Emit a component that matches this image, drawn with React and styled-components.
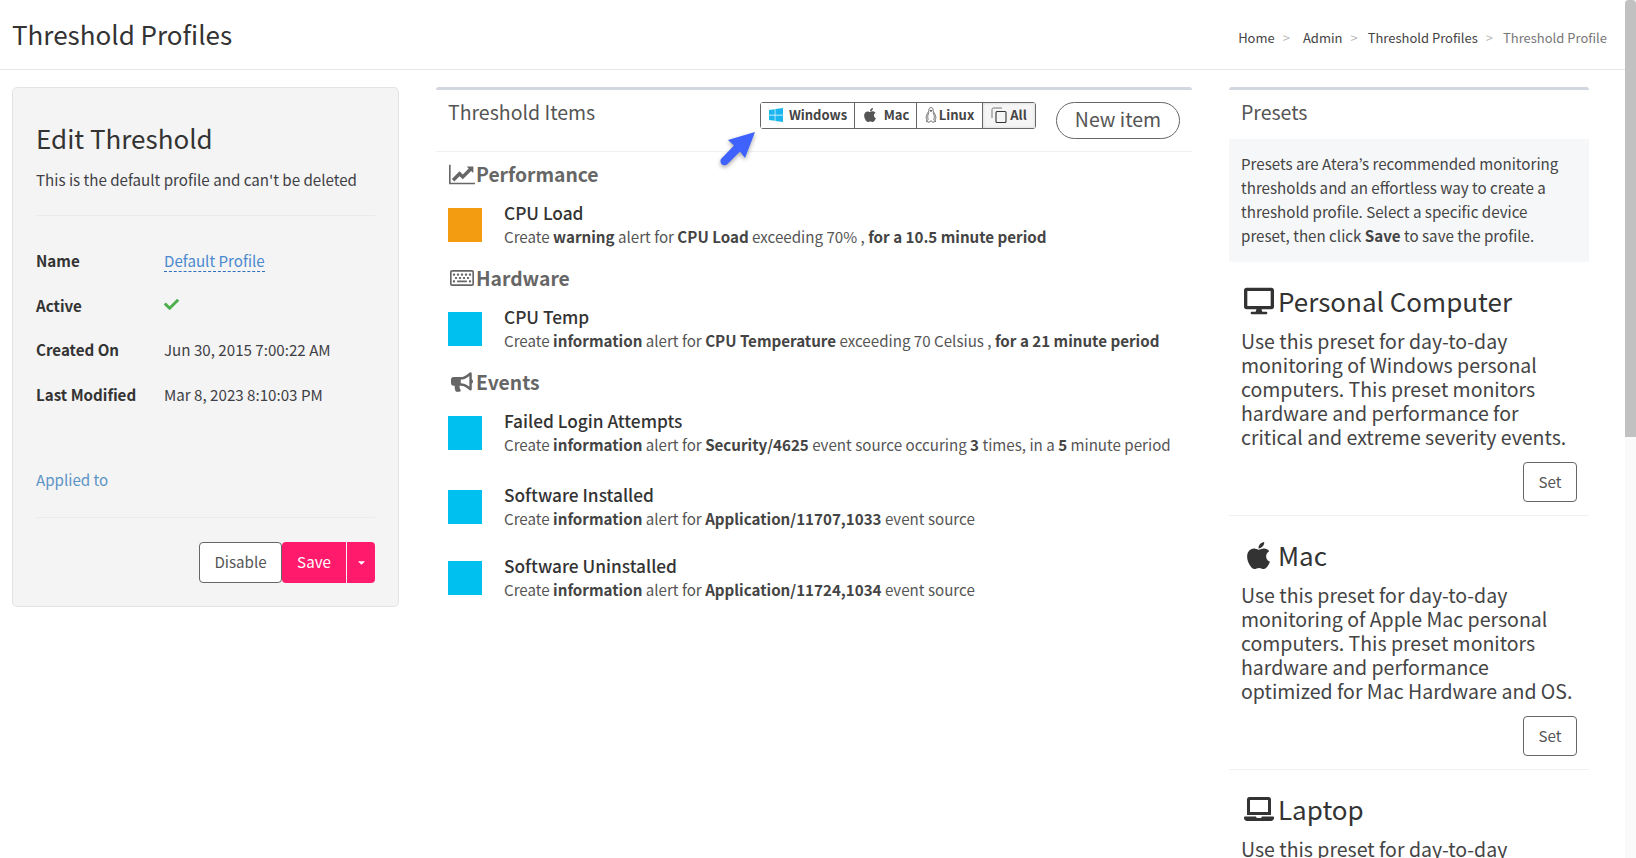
import React from 'react';
import styled, { createGlobalStyle } from 'styled-components';
import {
  FaApple, FaBullhorn, FaCaretDown, FaCheck, FaDesktop, FaLaptop,
  FaRegKeyboard, FaWindows,
} from 'react-icons/fa';

const GlobalStyle = createGlobalStyle`
  html, body {
    margin: 0;
    height: 858px;
    overflow: hidden;
    background: #fff;
  }
  body {
    font-family: "Noto Sans CJK KR", "Source Sans Pro", "Noto Sans", sans-serif;
    font-size: 15.15px;
    line-height: 24px;
    color: #3f3f46;
  }
  * { box-sizing: border-box; }
`;

const Page = styled.div`
  width: 1625px;
`;

const Header = styled.header`
  height: 70px;
  display: flex;
  align-items: center;
  justify-content: space-between;
  padding: 0 18px 2px 12px;
  border-bottom: 1px solid #e7e7e7;
`;

const Title = styled.h1`
  margin: 0;
  font-size: 26px;
  line-height: 36px;
  font-weight: 400;
  color: #333;
`;

const Crumbs = styled.nav`
  display: flex;
  align-items: center;
  font-size: 13px;
  margin-top: 8px;
`;

const Crumb = styled.span`
  color: ${p => (p.$current ? '#777' : '#444')};
`;

const Sep = styled.span`
  color: #bbb;
  margin: 0 ${p => p.$after}px 0 8px;
`;

const Columns = styled.div`
  display: flex;
  align-items: flex-start;
  gap: 37px;
  padding: 17px 0 0 12px;
`;

const EditPanel = styled.section`
  width: 387px;
  height: 520px;
  flex: none;
  background: #f4f4f4;
  border: 1px solid #e3e3e3;
  border-radius: 5px;
  padding: 32px 23px 0;
`;

const EditTitle = styled.h2`
  margin: 0;
  font-size: 26px;
  line-height: 36px;
  font-weight: 400;
  color: #333;
`;

const EditNote = styled.p`
  margin: 11px 0 0;
  line-height: 24px;
`;

const Rule = styled.div`
  height: 1px;
  background: #ebebeb;
  margin-top: ${p => p.$top}px;
`;

const InfoList = styled.div`
  display: grid;
  grid-template-columns: 128px 1fr;
  grid-auto-rows: 44.6px;
  align-items: center;
  margin-top: 22px;
`;

const InfoLabel = styled.div`
  font-weight: 700;
  color: #333;
`;

const InfoValue = styled.div`
  display: flex;
  align-items: center;
`;

const EditableLink = styled.span`
  color: #4a89cf;
  border-bottom: 1px dashed #2f6fbd;
  line-height: 22px;
`;

const AppliedLink = styled.div`
  color: #5b93c5;
  margin-top: 51px;
`;

const ActionRow = styled.div`
  display: flex;
  justify-content: flex-end;
  margin-top: 24px;
`;

const DisableButton = styled.button`
  width: 83px;
  height: 41px;
  font: inherit;
  color: #555;
  background: #fff;
  border: 1px solid #666;
  border-radius: 4px;
  padding: 0 0 3px;
`;

const SaveButton = styled.button`
  width: 64px;
  height: 41px;
  font: inherit;
  color: #fff;
  background: #ff1a6c;
  border: 0;
  border-radius: 4px 0 0 4px;
  padding: 0 0 3px;
`;

const CaretButton = styled.button`
  width: 28px;
  height: 41px;
  margin-left: 1px;
  color: #fff;
  background: #ff1a6c;
  border: 0;
  border-radius: 0 4px 4px 0;
  padding: 0;
  display: flex;
  align-items: center;
  justify-content: center;
  font-size: 11px;
`;

const ItemsPanel = styled.section`
  position: relative;
  width: 756px;
  flex: none;
  border-top: 3px solid #d2d6de;
  border-radius: 3px 3px 0 0;
`;

const ItemsHeader = styled.div`
  position: relative;
  height: 62px;
  padding: 8px 12px 0;
  display: flex;
  border-bottom: 1px solid #f1f1f1;
`;

const PanelTitle = styled.h3`
  margin: 0;
  font-size: 19.5px;
  line-height: 28px;
  font-weight: 400;
  color: #555;
  white-space: nowrap;
`;

const OsGroup = styled.div`
  display: flex;
  height: 27px;
  margin: 4px 0 0 auto;
  border: 1px solid #666;
  border-radius: 3px;
`;

const OsButton = styled.div`
  width: ${p => p.$w}px;
  display: flex;
  align-items: center;
  justify-content: center;
  gap: ${p => p.$gap}px;
  padding-bottom: 2px;
  font-size: 13px;
  font-weight: 700;
  color: #444;
  background: ${p => (p.$active ? '#f5f5f5' : '#fff')};
  box-shadow: ${p => (p.$active ? 'inset 0 0 3px rgba(0,0,0,.15)' : 'none')};
  border-left: ${p => (p.$first ? '0' : '1px solid #666')};
`;

const NewItemButton = styled.button`
  width: 124px;
  height: 37px;
  margin: 4px 0 0 20px;
  font: inherit;
  font-size: 19.5px;
  color: #555;
  background: #fff;
  border: 1px solid #666;
  border-radius: 19px;
  padding: 0 0 3px;
`;

const ArrowMark = styled.svg`
  position: absolute;
  left: 284px;
  top: 40px;
  overflow: visible;
  filter: drop-shadow(0 2px 2px rgba(0, 0, 0, 0.35));
`;

const ItemsBody = styled.div`
  padding: 0 12px;
`;

const GroupHeading = styled.h4`
  display: flex;
  align-items: center;
  gap: 1px;
  margin: ${p => p.$top}px 0 0;
  height: 28px;
  font-size: 19.3px;
  font-weight: 700;
  color: #666;
`;

const GroupIcon = styled.span`
  width: 27px;
  display: flex;
  justify-content: center;
  font-size: ${p => p.$size}px;
`;

const ItemRow = styled.div`
  display: flex;
  align-items: center;
  margin-top: ${p => p.$top}px;
`;

const Swatch = styled.div`
  width: 34px;
  height: 34px;
  flex: none;
  margin-right: 22px;
  background: ${p => (p.$warning ? '#f39c12' : '#00c0ef')};
`;

const ItemName = styled.div`
  font-size: 17.3px;
  line-height: 24px;
  font-weight: 500;
  color: #333;
`;

const ItemText = styled.div`
  color: #555;
  margin: -1px 0 1px;
  b { color: #444; font-weight: 700; }
`;

const PresetsPanel = styled.aside`
  width: 360px;
  flex: none;
  border-top: 3px solid #d2d6de;
  border-radius: 3px 3px 0 0;
`;

const PresetsTitle = styled(PanelTitle)`
  padding: 8px 12px 0;
  height: 49px;
`;

const PresetsNote = styled.div`
  background: #f6f7f9;
  padding: 12px 12px 11px;
  height: 123px;
  color: #444;
  b { font-weight: 700; }
`;

const Preset = styled.div`
  padding: 19px 12px 13px;
  border-bottom: 1px solid #f1f1f1;
`;

const PresetTitle = styled.h3`
  display: flex;
  align-items: center;
  gap: 2px;
  margin: 0;
  font-size: 26px;
  line-height: 40px;
  font-weight: 400;
  color: #333;
`;

const PresetIcon = styled.span`
  width: 35px;
  flex: none;
  display: flex;
  justify-content: center;
  font-size: ${p => p.$size}px;
`;

const PresetText = styled.p`
  margin: 8px 0 0;
  font-size: 19.5px;
  line-height: 24px;
  color: #444;
`;

const SetRow = styled.div`
  display: flex;
  justify-content: flex-end;
  margin-top: 13px;
`;

const SetButton = styled.button`
  width: 54px;
  height: 40px;
  font: inherit;
  color: #555;
  background: #fff;
  border: 1px solid #666;
  border-radius: 4px;
  padding: 0 0 2px;
`;

const ScrollTrack = styled.div`
  position: fixed;
  top: 0;
  right: 0;
  width: 11px;
  height: 858px;
  background: #fafafa;
`;

const ScrollThumb = styled.div`
  height: 437px;
  background: #c1c1c1;
  border-radius: 4px 4px 0 0;
`;

const TuxIcon = () => (
  <svg width="12" height="16" viewBox="0 0 12 16" fill="none" stroke="#555" strokeWidth="0.8">
    <path d="M6 .6c1.7 0 2.3 1.4 2.2 3 0 1.5 2.7 4 2.7 6.8 0 1-.4 2-1 2.6" />
    <path d="M6 .6c-1.7 0-2.3 1.4-2.2 3 0 1.5-2.7 4-2.7 6.8 0 1 .4 2 1 2.6" />
    <path d="M4 5.5c-1.2 2-1.6 4-1 6.5M8 5.5c1.2 2 1.6 4 1 6.5" />
    <path d="M4.8 3.5h2.4L6 4.6z" fill="#555" />
    <path d="M3.6 12.5L1 14.2l3.2 1.2 1-1.4h1.6l1 1.4 3.2-1.2-2.6-1.7" />
  </svg>
);

const CloneIcon = () => (
  <svg width="16" height="16" viewBox="0 0 16 16" fill="none">
    <path d="M11 1H2.5A1.5 1.5 0 0 0 1 2.5V11" stroke="#777" strokeWidth="1" />
    <rect x="5" y="4.5" width="10" height="11" rx="1" stroke="#333" strokeWidth="1.1" />
  </svg>
);

const LineChartIcon = () => (
  <svg width="26" height="23" viewBox="0 0 2048 1792" fill="currentColor">
    <path d="M2048 1536v128h-2048v-1536h128v1408h1920zM1920 288v435q0 21-19.5 29.5t-35.5-7.5l-121-121-633 633q-10 10-23 10t-23-10l-233-233-416 416-192-192 585-585q10-10 23-10t23 10l233 233 464-464-121-121q-16-16-7.5-35.5t29.5-19.5h435q14 0 23 9t9 23z" />
  </svg>
);

const groups = [
  {
    title: 'Performance', Icon: LineChartIcon, size: 25, top: 8,
    items: [{
      name: 'CPU Load', warning: true, top: 13,
      text: <>Create <b>warning</b> alert for <b>CPU Load</b> exceeding 70% , <b>for a 10.5 minute period</b></>,
    }],
  },
  {
    title: 'Hardware', Icon: FaRegKeyboard, size: 24, top: 15,
    items: [{
      name: 'CPU Temp', top: 13,
      text: <>Create <b>information</b> alert for <b>CPU Temperature</b> exceeding 70 Celsius , <b>for a 21 minute period</b></>,
    }],
  },
  {
    title: 'Events', Icon: FaBullhorn, size: 22, top: 15,
    items: [
      {
        name: 'Failed Login Attempts', top: 13,
        text: <>Create <b>information</b> alert for <b>Security/4625</b> event source occuring <b>3</b> times, in a <b>5</b> minute period</>,
      },
      {
        name: 'Software Installed', top: 26,
        text: <>Create <b>information</b> alert for <b>Application/11707,1033</b> event source</>,
      },
      {
        name: 'Software Uninstalled', top: 23,
        text: <>Create <b>information</b> alert for <b>Application/11724,1034</b> event source</>,
      },
    ],
  },
];

const presets = [
  {
    name: 'Personal Computer', Icon: FaDesktop, size: 30,
    text: 'Use this preset for day-to-day monitoring of Windows personal computers. This preset monitors hardware and performance for critical and extreme severity events.',
  },
  {
    name: 'Mac', Icon: FaApple, size: 31,
    text: 'Use this preset for day-to-day monitoring of Apple Mac personal computers. This preset monitors hardware and performance optimized for Mac Hardware and OS.',
  },
  {
    name: 'Laptop', Icon: FaLaptop, size: 30,
    text: 'Use this preset for day-to-day monitoring of laptop computers. This preset monitors hardware and performance.',
  },
];

const App = () => {
  return (
    <Page>
      <GlobalStyle />
      <Header>
        <Title>Threshold Profiles</Title>
        <Crumbs>
          <Crumb>Home</Crumb><Sep $after={13}>&gt;</Sep>
          <Crumb>Admin</Crumb><Sep $after={10}>&gt;</Sep>
          <Crumb>Threshold Profiles</Crumb><Sep $after={10}>&gt;</Sep>
          <Crumb $current>Threshold Profile</Crumb>
        </Crumbs>
      </Header>
      <Columns>
        <EditPanel>
          <EditTitle>Edit Threshold</EditTitle>
          <EditNote>This is the default profile and can't be deleted</EditNote>
          <Rule $top={24} />
          <InfoList>
            <InfoLabel>Name</InfoLabel>
            <InfoValue><EditableLink>Default Profile</EditableLink></InfoValue>
            <InfoLabel>Active</InfoLabel>
            <InfoValue><FaCheck color="#4cae4c" size={15} /></InfoValue>
            <InfoLabel>Created On</InfoLabel>
            <InfoValue>Jun 30, 2015 7:00:22 AM</InfoValue>
            <InfoLabel>Last Modified</InfoLabel>
            <InfoValue>Mar 8, 2023 8:10:03 PM</InfoValue>
          </InfoList>
          <AppliedLink>Applied to</AppliedLink>
          <Rule $top={26} />
          <ActionRow>
            <DisableButton>Disable</DisableButton>
            <SaveButton>Save</SaveButton>
            <CaretButton><FaCaretDown /></CaretButton>
          </ActionRow>
        </EditPanel>

        <ItemsPanel>
          <ItemsHeader>
            <PanelTitle>Threshold Items</PanelTitle>
            <OsGroup>
              <OsButton $w={93} $gap={5} $first><FaWindows color="#1bb6ee" size={16} />Windows</OsButton>
              <OsButton $w={62} $gap={6}><FaApple color="#555" size={16} />Mac</OsButton>
              <OsButton $w={66} $gap={2}><TuxIcon />Linux</OsButton>
              <OsButton $w={53} $gap={3} $active><CloneIcon />All</OsButton>
            </OsGroup>
            <NewItemButton>New item</NewItemButton>
            <ArrowMark width="38" height="38" viewBox="0 0 38 38">
              <path d="M35 2L8 10l6 5.5L1 29C-1 33 3 37 7 34.5l13-13L25 28z" fill="#3f62ff" />
            </ArrowMark>
          </ItemsHeader>
          <ItemsBody>
            {groups.map(group => (
              <React.Fragment key={group.title}>
                <GroupHeading $top={group.top}>
                  <GroupIcon $size={group.size}><group.Icon /></GroupIcon>
                  {group.title}
                </GroupHeading>
                {group.items.map(item => (
                  <ItemRow key={item.name} $top={item.top}>
                    <Swatch $warning={item.warning} />
                    <div>
                      <ItemName>{item.name}</ItemName>
                      <ItemText>{item.text}</ItemText>
                    </div>
                  </ItemRow>
                ))}
              </React.Fragment>
            ))}
          </ItemsBody>
        </ItemsPanel>

        <PresetsPanel>
          <PresetsTitle>Presets</PresetsTitle>
          <PresetsNote>
            Presets are Atera’s recommended monitoring thresholds and an effortless way to create a threshold profile. Select a specific device preset, then click <b>Save</b> to save the profile.
          </PresetsNote>
          {presets.map(preset => (
            <Preset key={preset.name}>
              <PresetTitle>
                <PresetIcon $size={preset.size}><preset.Icon /></PresetIcon>
                {preset.name}
              </PresetTitle>
              <PresetText>{preset.text}</PresetText>
              <SetRow><SetButton>Set</SetButton></SetRow>
            </Preset>
          ))}
        </PresetsPanel>
      </Columns>
      <ScrollTrack><ScrollThumb /></ScrollTrack>
    </Page>
  );
};

export default App;
